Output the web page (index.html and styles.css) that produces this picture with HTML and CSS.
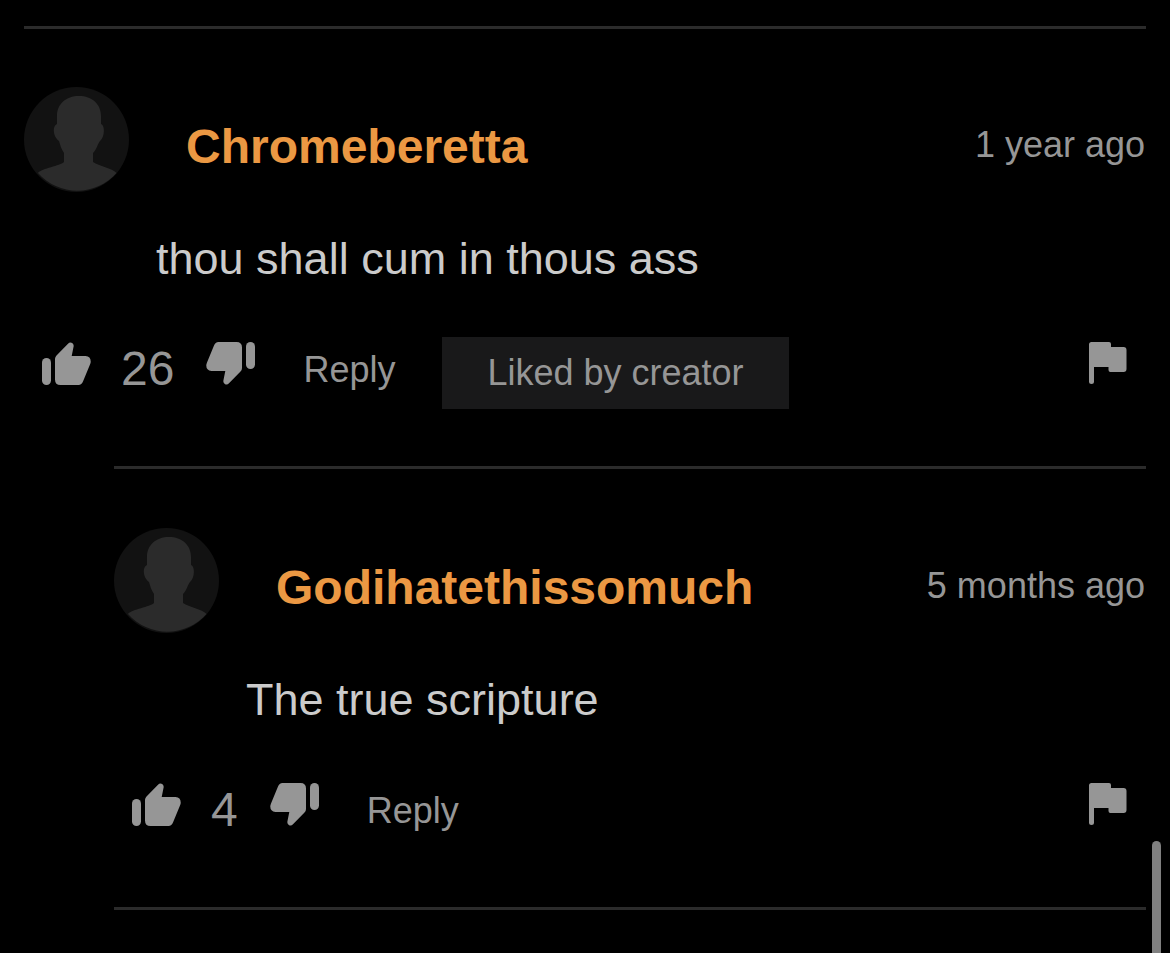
FILE: index.html
```html
<!DOCTYPE html>
<html lang="en">
<head>
  <meta charset="UTF-8">
  <meta name="viewport" content="width=device-width, initial-scale=1">
  <title>Comments</title>
  <link rel="stylesheet" href="styles.css">
</head>
<body>
  <!-- shared icons -->
  <svg class="sprite" aria-hidden="true">
    <symbol id="thumb" viewBox="0 0 49 43">
      <rect x="0" y="16" width="9" height="27" rx="4.5"/>
      <path d="M13 17Q13 15 14.500 13.500L26 1.700Q28 -.3 30.200 1Q32 2.200 31.600 4.500L29.700 14H43.500Q49 14.500 48.700 20Q48.600 21 48 22.500L41.200 39Q39.700 43 36.500 43H18.500Q13 43 13 37.500Z"/>
    </symbol>
    <symbol id="flag" viewBox="0 0 38 42">
      <path d="M2.500 0H20Q22 0 22 2V5H34.500Q37.500 5 37.500 8V27Q37.500 30 34.500 30H21.500Q19.500 30 19.500 28V25H5V39.500Q5 42 2.500 42T0 39.500V2.500Q0 0 2.500 0Z"/>
    </symbol>
    <symbol id="avatar" viewBox="0 0 105 105">
      <circle class="avatar-bg" cx="52.5" cy="52.5" r="52.5"/>
      <path class="avatar-person" d="M33 37V29C33 17 42 9 55 9C68 9 77 17 77 29V37C81 38 81 50 76 54C74 56 73 62 69 66V75C75 79 88 81 92.500 86A52.5 52.5 0 0 1 14 86C18 81 36 79 40 75V66C37 62 36 57 35 54C29 50 28 39 33 37Z"/>
    </symbol>
  </svg>

  <main class="comments">
    <article class="comment">
      <header class="comment-header">
        <svg class="avatar"><use href="#avatar"/></svg>
        <a class="username" href="#">Chromeberetta</a>
        <span class="time">1 year ago</span>
      </header>
      <p class="message">thou shall cum in thous ass</p>
      <div class="actions">
        <button class="vote" type="button" aria-label="Like"><svg><use href="#thumb"/></svg></button>
        <span class="count">26</span>
        <button class="vote down" type="button" aria-label="Dislike"><svg><use href="#thumb"/></svg></button>
        <button class="reply-btn" type="button">Reply</button>
        <span class="liked">Liked by creator</span>
        <button class="flag" type="button" aria-label="Report"><svg><use href="#flag"/></svg></button>
      </div>
    </article>

    <div class="replies">
      <article class="comment">
        <header class="comment-header">
          <svg class="avatar"><use href="#avatar"/></svg>
          <a class="username" href="#">Godihatethissomuch</a>
          <span class="time">5 months ago</span>
        </header>
        <p class="message">The true scripture</p>
        <div class="actions">
          <button class="vote" type="button" aria-label="Like"><svg><use href="#thumb"/></svg></button>
          <span class="count">4</span>
          <button class="vote down" type="button" aria-label="Dislike"><svg><use href="#thumb"/></svg></button>
          <button class="reply-btn" type="button">Reply</button>
          <button class="flag" type="button" aria-label="Report"><svg><use href="#flag"/></svg></button>
        </div>
      </article>
    </div>
  </main>

  <div class="scroll-thumb"></div>
</body>
</html>
```
FILE: styles.css
```css
* { box-sizing: border-box; }

body {
  margin: 0;
  background: #000;
  color: #969696;
  font-family: "Liberation Sans", Arial, sans-serif;
  font-size: 36px;
}

.sprite {
  display: none;
}

.comments {
  padding: 26px 24px 0;
}

.comment {
  border-top: 3px solid #2b2b2b;
  padding: 58px 0 57px;
}

.replies {
  margin-left: 90px;
  border-bottom: 3px solid #2b2b2b;
}

.replies .comment {
  padding-top: 59px;
}

.comment-header {
  display: flex;
  align-items: center;
}

.avatar {
  width: 105px;
  height: 105px;
  flex-shrink: 0;
}

.avatar-bg {
  fill: #121212;
}

.avatar-person {
  fill: #2b2b2b;
}

.username {
  margin: 14px 0 0 57px;
  color: #eb9843;
  font-size: 48px;
  font-weight: 700;
  text-decoration: none;
}

.time {
  margin: 10px 1px 0 auto;
  white-space: nowrap;
}

.message {
  margin: 40px 0 51px;
  padding-left: 132px;
  color: #cbcbcb;
  font-size: 45px;
  line-height: 54px;
}

.actions {
  display: flex;
  align-items: flex-start;
  height: 72px;
  padding: 0 19px 0 18px;
}

button {
  padding: 0;
  border: none;
  background: none;
  color: inherit;
  font: inherit;
  cursor: pointer;
}

button svg {
  display: block;
  fill: currentColor;
}

.vote {
  margin-top: 5px;
}

.vote svg {
  width: 49px;
  height: 43px;
}

.down svg {
  transform: rotate(180deg);
}

.count {
  margin: 0 32px 0 30px;
  font-size: 48px;
  line-height: 64px;
}

.reply-btn {
  margin: 0 47px 0 48px;
  line-height: 66px;
}

.liked {
  padding: 0 45px;
  background: #19191a;
  line-height: 72px;
}

.flag {
  margin: 5px 0 0 auto;
}

.flag svg {
  width: 38px;
  height: 42px;
}

.scroll-thumb {
  position: fixed;
  right: 9px;
  bottom: 0;
  width: 9px;
  height: 112px;
  border-radius: 5px 5px 0 0;
  background: #808080;
}
```
